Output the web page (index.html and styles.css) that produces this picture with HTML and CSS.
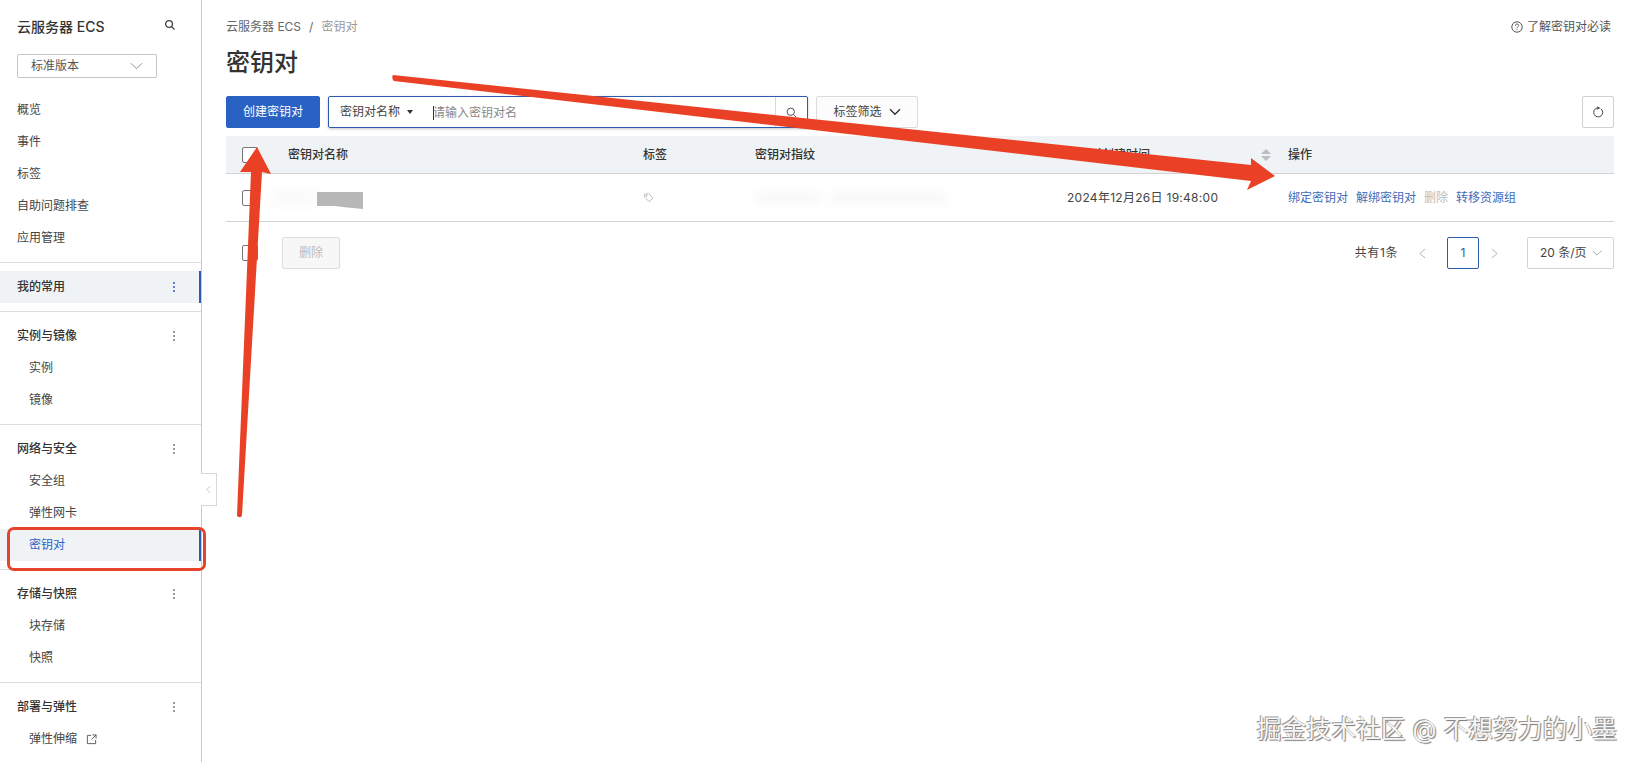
FILE: index.html
```html
<!DOCTYPE html>
<html lang="zh-CN">
<head>
<meta charset="utf-8">
<title>密钥对</title>
<link rel="stylesheet" href="styles.css">
</head>
<body>
<div class="app">
  <aside class="sidebar">
    <div class="side-head">
      <span class="side-title">云服务器 ECS</span>
      <svg class="side-search" viewBox="0 0 12 12"><circle cx="5" cy="5" r="3.4"/><path d="M7.6 7.6 10.5 10.5"/></svg>
    </div>
    <div class="version"><span>标准版本</span><svg viewBox="0 0 14 8"><path d="M1 1 7 7 13 1"/></svg></div>
    <nav class="group first">
      <a class="item">概览</a><a class="item">事件</a><a class="item">标签</a><a class="item">自助问题排查</a><a class="item">应用管理</a>
    </nav>
    <div class="fav-wrap">
      <div class="item head fav"><span>我的常用</span><i class="dots blue"><b></b><b></b><b></b></i></div>
    </div>
    <nav class="group">
      <div class="item head"><span>实例与镜像</span><i class="dots"><b></b><b></b><b></b></i></div>
      <a class="item sub">实例</a><a class="item sub">镜像</a>
    </nav>
    <nav class="group">
      <div class="item head"><span>网络与安全</span><i class="dots"><b></b><b></b><b></b></i></div>
      <a class="item sub">安全组</a><a class="item sub">弹性网卡</a><a class="item sub active">密钥对</a>
    </nav>
    <nav class="group">
      <div class="item head"><span>存储与快照</span><i class="dots"><b></b><b></b><b></b></i></div>
      <a class="item sub">块存储</a><a class="item sub">快照</a>
    </nav>
    <nav class="group">
      <div class="item head"><span>部署与弹性</span><i class="dots"><b></b><b></b><b></b></i></div>
      <a class="item sub">弹性伸缩<svg class="ext" viewBox="0 0 12 12"><path d="M5.5 1.5H1.5V10.5H10.5V6.5M7 1H11V5M11 1 6 6"/></svg></a>
    </nav>
  </aside>

  <main class="main">
    <div class="crumbs">
      <div class="crumb-path"><span>云服务器 ECS</span><span class="sep">/</span><span class="muted">密钥对</span></div>
      <div class="help"><svg viewBox="0 0 12 12"><circle cx="6" cy="6" r="5.2"/><path d="M4.4 4.7C4.4 3.7 5.1 3.1 6 3.1S7.6 3.7 7.6 4.6C7.6 5.7 6 5.8 6 7.2M6 8.3V9.1"/></svg><span>了解密钥对必读</span></div>
    </div>
    <h1 class="title">密钥对</h1>
    <div class="toolbar">
      <button class="btn primary">创建密钥对</button>
      <div class="search">
        <div class="search-type"><span>密钥对名称</span><i class="caret"></i></div>
        <div class="search-input"><span class="cursor"></span><span>请输入密钥对名</span></div>
        <div class="search-btn"><svg viewBox="0 0 12 12"><circle cx="5.2" cy="5.2" r="4"/><path d="M8.2 8.2 11 11"/></svg></div>
      </div>
      <button class="btn tagfilter"><span>标签筛选</span><svg viewBox="0 0 12 8"><path d="M1 1.2 6 6.2 11 1.2"/></svg></button>
      <button class="btn refresh"><svg viewBox="0 0 12 12"><path d="M8.9 2.8A4.5 4.5 0 1 1 5.2 2"/><path class="solid" d="M5.2 .2 8.2 2 5.2 3.8Z"/></svg></button>
    </div>
    <div class="table">
      <div class="row thead">
        <div class="c-check"><span class="check"></span></div>
        <div class="c-name">密钥对名称</div>
        <div class="c-tag">标签</div>
        <div class="c-finger">密钥对指纹</div>
        <div class="c-time"><span>密钥对创建时间</span><i class="sort"><em class="up"></em><em class="down"></em></i></div>
        <div class="c-ops">操作</div>
      </div>
      <div class="row tbody">
        <div class="c-check"><span class="check"></span></div>
        <div class="c-name"><span class="mask-soft"></span><span class="mask"></span></div>
        <div class="c-tag"><svg class="tag" viewBox="0 0 12 12"><path d="M1.5 2.5 6 1.8 10.8 6.6 6.8 10.6 2 5.8Z"/><circle cx="4" cy="4.2" r=".6"/></svg></div>
        <div class="c-finger"><span class="blur-a"></span><span class="blur-b"></span></div>
        <div class="c-time date">2024年12月26日 19:48:00</div>
        <div class="c-ops ops"><a>绑定密钥对</a><a>解绑密钥对</a><span>删除</span><a>转移资源组</a></div>
      </div>
    </div>
    <div class="footer">
      <div class="c-check"><span class="check"></span></div>
      <button class="btn disabled">删除</button>
      <div class="pager">
        <span class="total">共有1条</span>
        <svg class="pg-arrow" viewBox="0 0 8 12"><path d="M7 1 1 6 7 11"/></svg>
        <span class="page">1</span>
        <svg class="pg-arrow" viewBox="0 0 8 12"><path d="M1 1 7 6 1 11"/></svg>
        <div class="size"><span>20 条/页</span><svg viewBox="0 0 14 8"><path d="M1 1 7 7 13 1"/></svg></div>
      </div>
    </div>
  </main>
</div>

<div class="collapse"><svg viewBox="0 0 6 10"><path d="M5 1 1 5 5 9"/></svg></div>
<div class="redbox"></div>
<svg class="arrows" viewBox="0 0 1638 762">
  <path d="M393 75 C392 76 392 80 394 81 L1251 181 L1247 190 L1275 176 L1251 158 L1251 165 Z"/>
  <path d="M237 515 C237 518 242 518 242 515 L262 172 L271 174 L257 147 L240 172 L251 172 Z"/>
</svg>
<div class="watermark">掘金技术社区 @ 不想努力的小墨</div>
</body>
</html>
```
FILE: styles.css
```css
* { box-sizing: border-box; }
html, body { margin: 0; height: 762px; overflow: hidden; }
body {
  position: relative;
  background: #fff;
  color: #333;
  font: 12px/18px Inter, "Noto Sans CJK SC", sans-serif;
}
.app { display: flex; height: 762px; }

/* sidebar */
.sidebar {
  width: 202px;
  flex: none;
  height: 762px;
  overflow: hidden;
  border-right: 1px solid #c9c9c9;
}
.side-head {
  display: flex;
  justify-content: space-between;
  align-items: center;
  padding: 17px 25px 0 17px;
  height: 37px;
}
.side-title { font-size: 14px; font-weight: 500; color: #333; }
.side-search { width: 12px; height: 12px; margin-top: -4px; fill: none; stroke: #444; stroke-width: 1.3; }
.version {
  display: flex;
  justify-content: space-between;
  align-items: center;
  width: 140px;
  height: 24px;
  margin: 17px 0 0 17px;
  padding: 0 13px;
  border: 1px solid #c6c6c6;
  border-radius: 2px;
  color: #555;
}
.version svg { width: 13px; height: 8px; fill: none; stroke: #888; }
.group {
  padding: 8px 0 8px;
  border-top: 1px solid #dedede;
}
.group.first { border-top: 0; padding: 16px 0 8px; }
.fav-wrap { padding: 8px 0; border-top: 1px solid #dedede; }
.item {
  display: flex;
  align-items: center;
  height: 32px;
  padding: 0 17px;
  color: #444;
}
.item.head { justify-content: space-between; font-weight: 500; color: #333; padding-right: 26px; }
.item.sub { padding-left: 29px; }
.item.fav { background: #eff3f6; box-shadow: inset -2px 0 0 #2d5cae; }
.item.active { background: #eff3f6; color: #2a62c8; box-shadow: inset -2px 0 0 #2d5cae; }
.dots { display: flex; flex-direction: column; gap: 2px; }
.dots b { width: 2px; height: 2px; border-radius: 50%; background: #777; }
.dots.blue b { background: #2d5cc0; }
.ext { width: 11px; height: 11px; margin-left: 9px; fill: none; stroke: #555; }

/* main */
.main { flex: 1; min-width: 0; padding: 0 24px; }
.crumbs {
  display: flex;
  justify-content: space-between;
  align-items: center;
  height: 18px;
  margin-top: 18px;
  color: #666;
}
.crumb-path { display: flex; gap: 8px; }
.muted { color: #999; }
.help { display: flex; align-items: center; gap: 4px; color: #555; padding-right: 3px; }
.help svg { width: 12px; height: 12px; fill: none; stroke: #555; }
.title { margin: 11px 0 0; font-size: 24px; line-height: 32px; font-weight: 500; color: #333; }
.toolbar { display: flex; align-items: flex-start; margin-top: 17px; height: 32px; }
.btn {
  display: inline-flex;
  align-items: center;
  justify-content: center;
  height: 32px;
  padding: 0;
  border: 1px solid #dcdcdc;
  border-radius: 2px;
  background: #fff;
  color: #444;
  font: inherit;
}
.btn.primary { width: 94px; background: #2a62c4; border-color: #2a62c4; color: #fff; }
.search {
  display: flex;
  width: 480px;
  height: 32px;
  margin-left: 8px;
  border: 1px solid #2d5cae;
  border-radius: 2px;
  box-shadow: 0 1px 3px rgba(0, 0, 0, .22);
}
.search-type { display: flex; align-items: center; gap: 7px; width: 104px; padding-left: 11px; color: #444; }
.caret { width: 0; height: 0; border: 3.5px solid transparent; border-top: 4px solid #333; border-bottom: 0; }
.search-input { flex: 1; display: flex; align-items: center; color: #888; padding-top: 1px; }
.cursor { width: 1px; height: 14px; margin-right: -1px; background: #333; }
.search-btn { display: flex; align-items: center; justify-content: center; width: 32px; border-left: 1px solid #d8d8d8; }
.search-btn svg { width: 11px; height: 11px; fill: none; stroke: #444; }
.btn.tagfilter { gap: 7px; width: 102px; height: 32px; margin-left: 8px; background: #fcfcfc; }
.btn.tagfilter svg { width: 12px; height: 8px; fill: none; stroke: #333; stroke-width: 1.4; }
.btn.refresh { width: 32px; margin-left: auto; border-color: #cfcfcf; }
.btn.refresh svg { width: 12px; height: 12px; fill: none; stroke: #444; }
.btn.refresh .solid { fill: #444; stroke: none; }

.table { margin-top: 8px; }
.row { display: flex; align-items: center; border-bottom: 1px solid #d3d3d3; }
.thead { height: 38px; background: #eff3f6; font-weight: 500; color: #333; }
.tbody { height: 48px; color: #444; }
.c-check { width: 62px; flex: none; padding-left: 16px; display: flex; }
.check { width: 16px; height: 16px; border: 1px solid #777; border-radius: 2px; background: #fff; }
.c-name { width: 355px; flex: none; position: relative; height: 100%; display: flex; align-items: center; }
.c-tag { width: 112px; flex: none; }
.c-finger { width: 311px; flex: none; display: flex; gap: 10px; }
.c-time { width: 222px; flex: none; display: flex; justify-content: space-between; padding-right: 17px; align-items: center; }
.date { letter-spacing: .28px; padding-left: 1px; }
.c-ops { flex: 1; }
.mask { position: absolute; left: 29px; top: 18px; width: 46px; height: 17px; background: #b7b7b7; clip-path: polygon(0 0, 100% 0, 100% 100%, 60% 90%, 40% 82%, 0 82%); }
.mask-soft { position: absolute; left: -16px; top: 14px; width: 46px; height: 20px; background: #fbfbfb; filter: blur(4px); }
.blur-a, .blur-b { height: 12px; background: #f8f8f8; filter: blur(5px); }
.blur-a { width: 66px; }
.blur-b { width: 115px; }
.tag { display: block; width: 11px; height: 11px; fill: none; stroke: #b5b5b5; }
.sort { display: flex; flex-direction: column; gap: 2px; }
.sort em { width: 0; height: 0; border: 5px solid transparent; }
.sort .up { border-top: 0; border-bottom: 5px solid #b9bec2; }
.sort .down { border-bottom: 0; border-top: 5px solid #b9bec2; }
.ops { display: flex; gap: 8px; color: #bbb; }
.ops a { color: #3e6db8; }

.footer { display: flex; align-items: center; height: 32px; margin-top: 15px; }
.footer .c-check { width: 56px; }
.btn.disabled { width: 58px; background: #f7f7f7; color: #bbb; border-color: #dedede; }
.pager { display: flex; align-items: center; margin-left: auto; }
.total { margin-right: 21px; color: #444; letter-spacing: .6px; }
.pg-arrow { width: 7px; height: 11px; fill: none; stroke: #aaa; }
.page {
  display: flex; align-items: center; justify-content: center;
  width: 32px; height: 32px; margin: 0 12px 0 21px;
  border: 1px solid #2d5cae; border-radius: 2px; color: #2d5cae;
}
.size {
  display: flex; align-items: center; justify-content: space-between;
  width: 87px; height: 32px; margin-left: 29px; padding: 0 11px 0 12px;
  border: 1px solid #d4d4d4; border-radius: 2px; color: #444;
}
.size svg { width: 10px; height: 6px; fill: none; stroke: #888; }

/* overlays */
.collapse {
  position: absolute; left: 201px; top: 473px;
  display: flex; align-items: center; justify-content: center;
  width: 16px; height: 33px;
  background: #fff; border: 1px solid #d8d8d8; border-left: 0;
}
.collapse svg { width: 5px; height: 9px; fill: none; stroke: #bbb; }
.redbox {
  position: absolute; left: 7px; top: 527px;
  width: 199px; height: 44px;
  border: 3px solid #e5432a; border-radius: 7px;
}
.arrows { position: absolute; left: 0; top: 0; width: 1638px; height: 762px; pointer-events: none; }
.arrows path { fill: #ea4126; }
.watermark {
  position: absolute; right: 21px; top: 714px;
  font-size: 24.8px; line-height: 30px; white-space: nowrap;
  color: #f6f6f6;
  text-shadow: -1px -1px 0 #999, 1px 1px 1px #777;
}
```
